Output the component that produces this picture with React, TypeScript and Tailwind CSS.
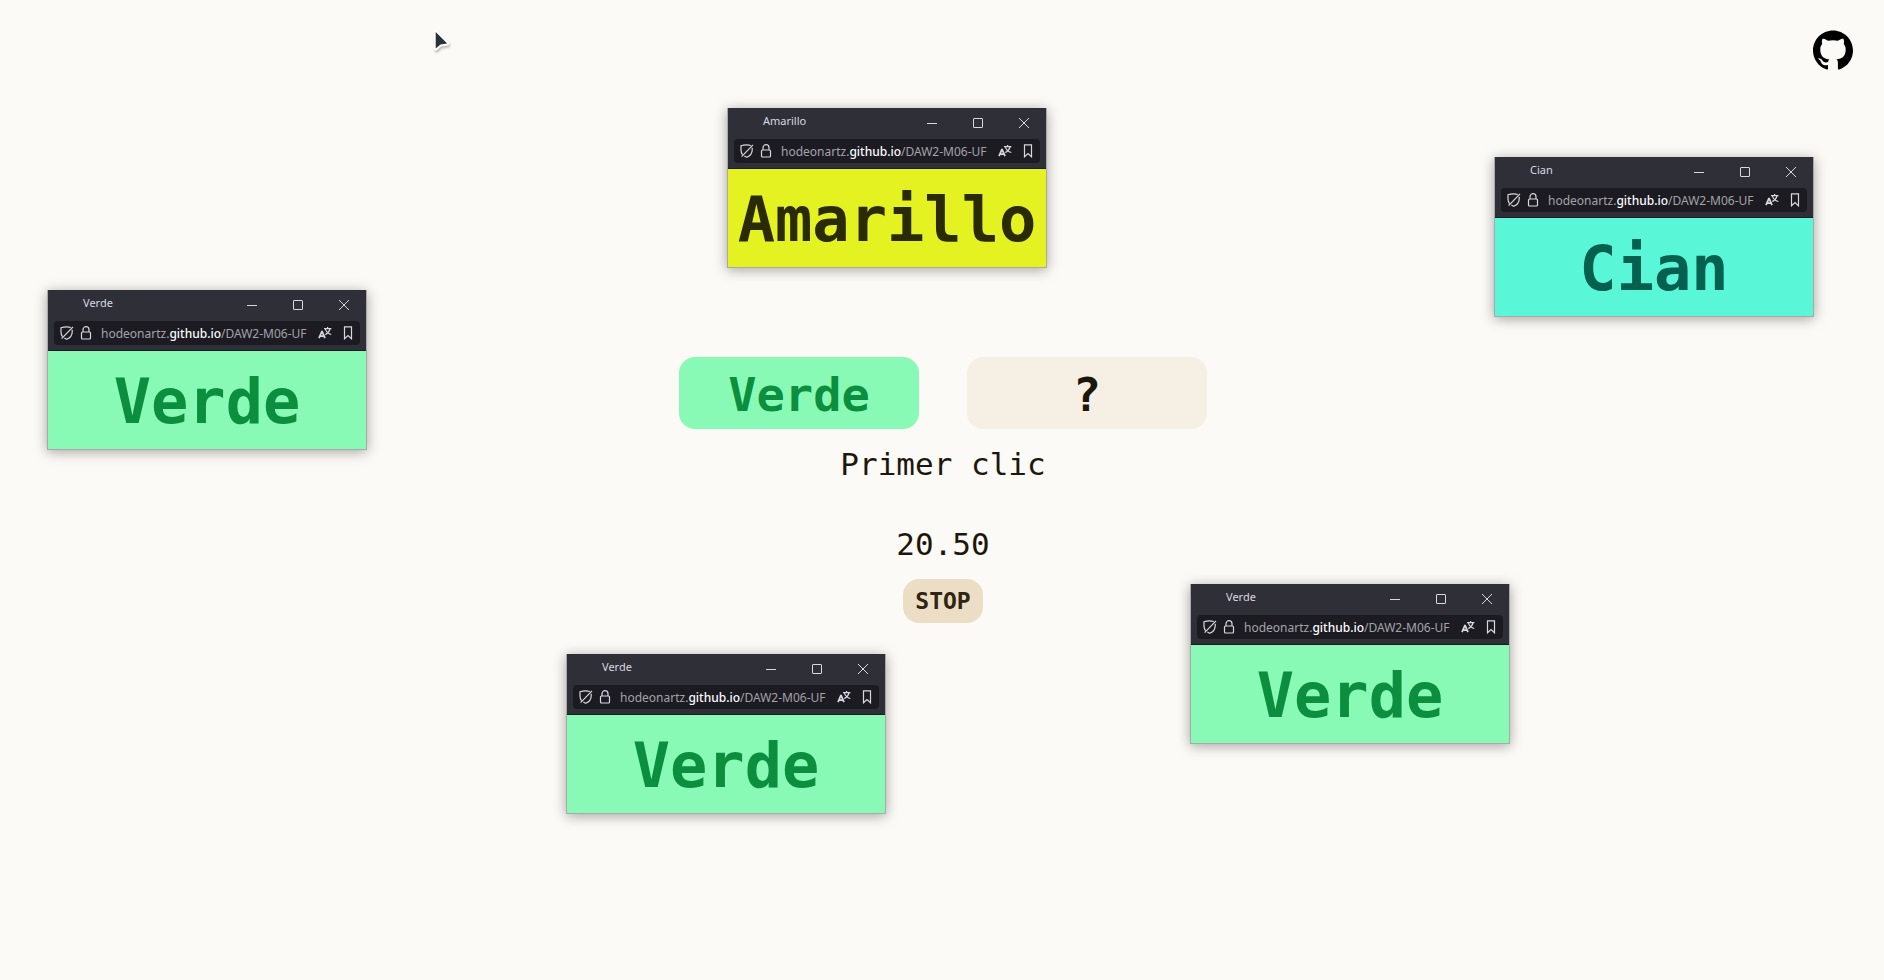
import React, { useState } from "react";
import { SiGithub } from "react-icons/si";

type Tone = "green" | "yellow" | "cyan";

interface ColorWindow {
  id: number;
  name: string;
  tone: Tone;
  place: string;
}

const tones: Record<Tone, string> = {
  green: "bg-[#88fab5] text-[#0b8f3f]",
  yellow: "bg-[#e5f222] text-[#2a2b04]",
  cyan: "bg-[#59f6d8] text-[#06604f]",
};

const windows: ColorWindow[] = [
  { id: 1, name: "Amarillo", tone: "yellow", place: "left-[727px] top-[108px]" },
  { id: 2, name: "Cian", tone: "cyan", place: "left-[1494px] top-[157px]" },
  { id: 3, name: "Verde", tone: "green", place: "left-[47px] top-[290px]" },
  { id: 4, name: "Verde", tone: "green", place: "left-[566px] top-[654px]" },
  { id: 5, name: "Verde", tone: "green", place: "left-[1190px] top-[584px]" },
];

function ShieldOffIcon() {
  return (
    <svg className="h-[14px] w-[14px] shrink-0" viewBox="0 0 14 14" fill="none" stroke="currentColor" strokeWidth="1.2" aria-hidden="true">
      <path d="M10.800 1.500C9.500 1 8 .8 6.500.8 4.500.8 2.700 1.100 1 1.700v4.300c0 1.800.500 3.300 1.500 4.600M12.200 3.800v2.200c0 3.500-2 5.800-5.400 7.300-.9-.4-1.700-.9-2.400-1.400M13 .8 1.600 12.600" />
    </svg>
  );
}

function LockIcon() {
  return (
    <svg className="h-[14px] w-[12px] shrink-0" viewBox="0 0 12 14" fill="none" stroke="currentColor" strokeWidth="1.2" aria-hidden="true">
      <path d="M3 6V3.700a3 3 0 0 1 6 0V6" />
      <rect x="1.500" y="6" width="9" height="7" rx="1" />
    </svg>
  );
}

function TranslateIcon() {
  return (
    <svg className="h-[14px] w-[14px]" viewBox="0 0 14 14" fill="none" stroke="currentColor" aria-hidden="true">
      <path d="M1 12.200 3.800 5.600h.4L7 12.200M2.100 10.200h3.800" strokeWidth="1.700" />
      <path d="M6 2.700h7.400M9.600 1v1.700M12 2.900c-.6 2.700-2.300 4.500-4.700 5.700M7.400 3.100c.8 2.500 2.900 4.500 5.900 5.400" strokeWidth="1.200" />
    </svg>
  );
}

function BookmarkIcon() {
  return (
    <svg className="h-[14px] w-[10px]" viewBox="0 0 10 14" fill="none" stroke="currentColor" strokeWidth="1.200" aria-hidden="true">
      <path d="M1.500.8h7v12L5 9.600l-3.500 3.200z" />
    </svg>
  );
}

function WindowCard({ item }: { item: ColorWindow }) {
  return (
    <section
      aria-label={item.name}
      className={`absolute flex h-[160px] w-[320px] flex-col border border-t-0 border-[#a9a9a9] shadow-[0_2px_12px_rgba(0,0,0,0.35)] ${item.place}`}
    >
      <header className="border-b border-[#1c1b22] bg-[#2f2f38] px-[6px] pb-[5px] text-[#d8d8e0]">
        <div className="flex h-[31px] items-start pr-[11px] pl-[29px]">
          <h2 className="flex-1 pt-[5px] font-['Noto_Sans','Open_Sans',sans-serif] text-[11px] leading-4">{item.name}</h2>
          <div className="flex gap-9 pt-[10px]">
            <button type="button" aria-label="Minimizar" className="flex size-[10px] items-center">
              <svg className="size-[10px]" viewBox="0 0 10 10" stroke="currentColor" aria-hidden="true">
                <path d="M0 5.500h10" />
              </svg>
            </button>
            <button type="button" aria-label="Maximizar" className="size-[10px]">
              <svg className="size-[10px]" viewBox="0 0 10 10" fill="none" stroke="currentColor" aria-hidden="true">
                <rect x=".5" y=".5" width="9" height="9" rx=".5" />
              </svg>
            </button>
            <button type="button" aria-label="Cerrar" className="size-[10px]">
              <svg className="size-[10px]" viewBox="0 0 10 10" stroke="currentColor" aria-hidden="true">
                <path d="m0 0 10 10M10 0 0 10" />
              </svg>
            </button>
          </div>
        </div>
        <div className="flex h-6 items-center rounded bg-[#1c1b22] pr-[7px] pl-[6px]">
          <ShieldOffIcon />
          <span className="w-[6px]" />
          <LockIcon />
          <span className="ml-[9px] flex-1 overflow-hidden pt-0.5 font-['Noto_Sans','Open_Sans',sans-serif] text-[12px] leading-[22px] whitespace-nowrap text-[#a3a3ab]">
            hodeonartz.<span className="font-medium text-[#fbfbfe]">github.io</span>/DAW2-M06-UF
          </span>
          <button type="button" aria-label="Traducir">
            <TranslateIcon />
          </button>
          <button type="button" aria-label="Guardar en marcadores" className="ml-[11px]">
            <BookmarkIcon />
          </button>
        </div>
      </header>
      <button type="button" className={`flex-1 pt-[3px] text-[62px] leading-none font-bold ${tones[item.tone]}`}>
        {item.name}
      </button>
    </section>
  );
}

export default function App() {
  const [running, setRunning] = useState(true);

  return (
    <main className="relative flex min-h-screen flex-col items-center justify-center overflow-hidden bg-[#fcfaf6] pl-0.5 font-['DejaVu_Sans_Mono',monospace] text-[#1c170c]">
      <a href="https://github.com/hodeonartz" aria-label="GitHub" className="absolute top-[30px] right-[31px] text-black">
        <SiGithub className="size-10" />
      </a>

      <div className="flex gap-12 text-[47px] leading-none font-bold">
        <div className="flex h-[72px] w-[240px] items-center justify-center rounded-2xl bg-[#88fab5] pt-0.5 text-[#0b8f3f]">Verde</div>
        <div className="flex h-[72px] w-[240px] items-center justify-center rounded-2xl bg-[#f6efe4] pt-0.5">?</div>
      </div>
      <p className="mt-4 text-[31px] leading-[38px]">Primer clic</p>
      <p className="mt-[42px] text-[31px] leading-[38px]">20.50</p>
      <button
        type="button"
        onClick={() => setRunning(!running)}
        className="mt-4 h-11 rounded-2xl bg-[#ecdec5] px-3 text-[23px] leading-none font-bold text-[#2f2512]"
      >
        {running ? "STOP" : "START"}
      </button>

      {windows.map((item) => (
        <WindowCard key={item.id} item={item} />
      ))}

      <svg
        className="pointer-events-none absolute top-[28px] left-[432px] h-[28px] w-[20px] drop-shadow-[1px_2px_1px_rgba(0,0,0,0.25)]"
        viewBox="0 0 20 28"
        aria-hidden="true"
      >
        <path d="M3.700 4v16.500l4.800-4 6.700-.9z" fill="#263238" stroke="#fff" strokeWidth="4" strokeLinejoin="round" paintOrder="stroke" />
      </svg>
    </main>
  );
}
